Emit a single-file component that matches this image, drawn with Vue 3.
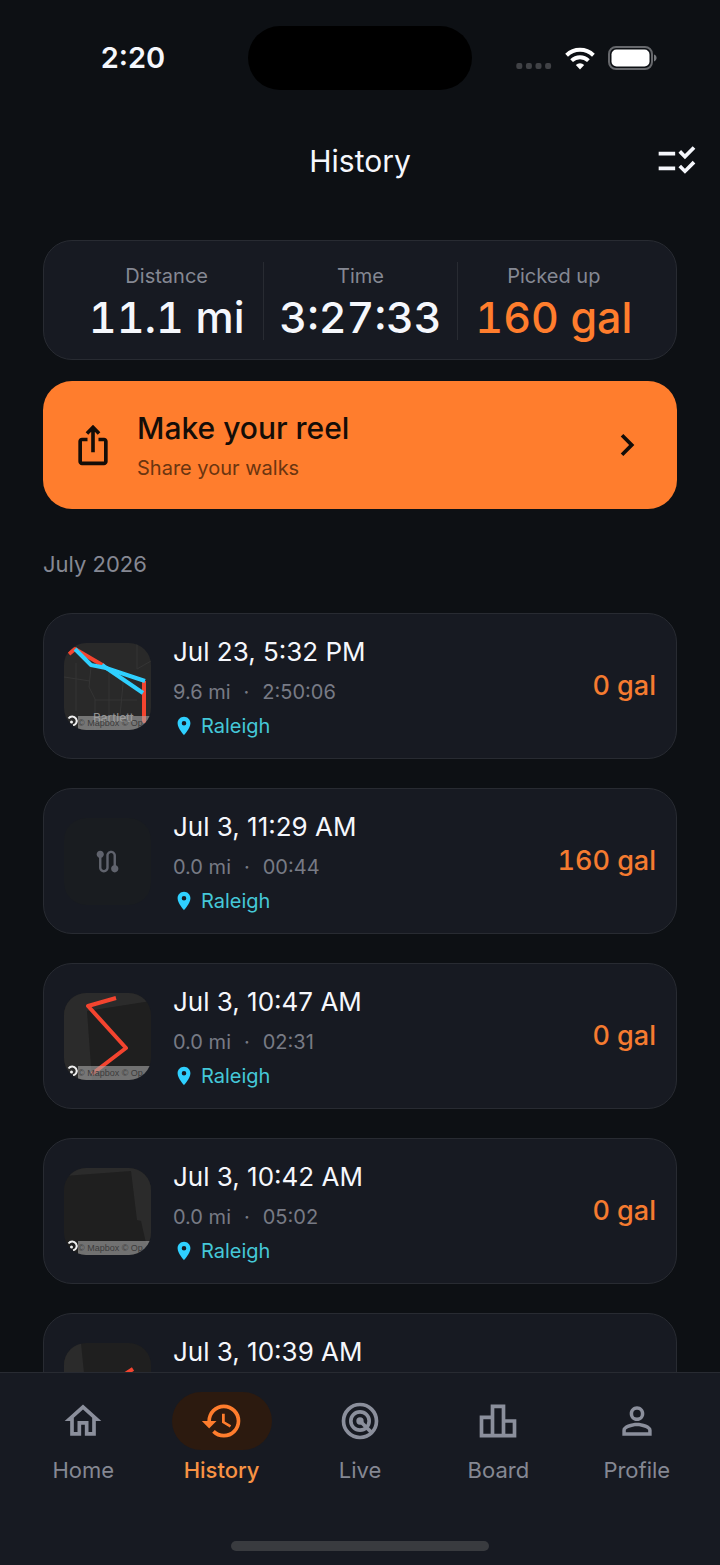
<template>
    <div class="screen">
        <div class="status-bar">
            <span class="clock">2:20</span>
            <span class="island"></span>
            <div class="status-icons">
                <svg class="signal" viewBox="0 0 36 8" aria-hidden="true">
                    <rect v-for="n in 4" :key="n" :x="(n - 1) * 9.6 + 0.3" y="1" width="6" height="6" rx="2" />
                </svg>
                <svg class="wifi" viewBox="0 0 30 23" aria-hidden="true">
                    <path d="M1.6 8.2a19.4 19.4 0 0 1 26.8 0" />
                    <path d="M6.6 13.6a12.4 12.4 0 0 1 16.8 0" />
                    <path class="wifi-dot" d="M15 22.4l-4.2-4.5a6.2 6.2 0 0 1 8.4 0z" />
                </svg>
                <svg class="battery" viewBox="0 0 50 24" aria-hidden="true">
                    <rect class="shell" x="1" y="1" width="43" height="22" rx="7" />
                    <rect class="charge" x="3.5" y="3.5" width="38" height="17" rx="5" />
                    <path class="tip" d="M46 8.6c3.4 1 3.4 5.8 0 6.8z" />
                </svg>
            </div>
        </div>

        <header class="app-bar">
            <h1>History</h1>
            <button class="select-button" type="button" aria-label="Select walks">
                <svg class="icon" viewBox="0 0 24 24"><path :d="icons.checklist" /></svg>
            </button>
        </header>

        <main class="content">
            <section class="stats">
                <div v-for="stat in stats" :key="stat.label" class="stat">
                    <span class="stat-label">{{ stat.label }}</span>
                    <span class="stat-value" :class="{ accent: stat.accent }">{{ stat.value }}</span>
                </div>
            </section>

            <button class="reel" type="button">
                <svg class="icon" viewBox="0 0 24 24"><path :d="icons.share" /></svg>
                <span class="reel-text">
                    <span class="reel-title">Make your reel</span>
                    <span class="reel-subtitle">Share your walks</span>
                </span>
                <svg class="icon" viewBox="0 0 24 24"><path :d="icons.chevron" /></svg>
            </button>

            <h2>July 2026</h2>

            <ul class="walks">
                <li v-for="walk in walks" :key="walk.date" class="walk">
                    <div v-if="!walk.map" class="thumb empty">
                        <svg viewBox="0 0 24 24"><path :d="icons.route" /></svg>
                    </div>
                    <svg v-else class="thumb" viewBox="0 0 87 87" aria-hidden="true">
                        <rect width="87" height="87" :fill="walk.map.ground" />
                        <path v-for="d in walk.map.areas" :key="d" :d="d" fill="#2b2b2b" />
                        <path v-for="d in walk.map.roads" :key="d" :d="d" class="road" />
                        <path v-for="line in walk.map.lines" :key="line.d" :d="line.d" class="track" :stroke="line.color" />
                        <text v-if="walk.map.place" class="place" x="29" y="79">{{ walk.map.place }}</text>
                        <rect class="credit-bar" x="14" y="73" width="73" height="14" />
                        <text class="credit" x="14" y="83">© Mapbox © Op</text>
                        <path class="map-logo" d="M4.5 75.5a4.5 4.5 0 1 1 4.5 7" />
                        <circle cx="7.5" cy="79" r="1.5" fill="#eee" />
                    </svg>
                    <div class="walk-info">
                        <span class="walk-date">{{ walk.date }}</span>
                        <span class="walk-meta">{{ walk.distance }}<span class="dot">·</span>{{ walk.time }}</span>
                        <span class="walk-place">
                            <svg viewBox="0 0 24 24" aria-hidden="true"><path :d="icons.pin" /></svg>
                            Raleigh
                        </span>
                    </div>
                    <span class="walk-amount">{{ walk.amount }}</span>
                </li>
            </ul>
        </main>

        <nav class="tab-bar">
            <div class="tabs">
                <a v-for="tab in tabs" :key="tab.label" href="#" class="tab" :class="{ active: tab.active }">
                    <span class="pill">
                        <svg v-if="tab.icon" class="icon" viewBox="0 0 24 24"><path :d="tab.icon" /></svg>
                        <svg v-else class="icon radar" viewBox="0 0 24 24">
                            <circle cx="12" cy="12" r="9" />
                            <circle cx="12" cy="12" r="5" />
                            <path d="M12 12l6.5 6.5" />
                            <circle class="core" cx="12" cy="12" r="2" />
                        </svg>
                    </span>
                    <span class="tab-label">{{ tab.label }}</span>
                </a>
            </div>
            <div class="home-indicator"></div>
        </nav>
    </div>
</template>

<script setup>
const icons = {
    checklist: 'M11 7H2v2h9V7zm0 8H2v2h9v-2zm5.34-4l-3.54-3.54 1.41-1.41 2.12 2.12 4.24-4.24L22 5.34 16.34 11zm0 8l-3.54-3.54 1.41-1.41 2.12 2.12 4.24-4.24L22 13.34 16.34 19z',
    share: 'M16 5l-1.42 1.42-1.59-1.59V16h-1.98V4.83L9.42 6.42 8 5l4-4 4 4zm4 5v11c0 1.1-.9 2-2 2H6c-1.11 0-2-.9-2-2V10c0-1.11.89-2 2-2h3v2H6v11h12V10h-3V8h3c1.1 0 2 .89 2 2z',
    chevron: 'M10 6L8.59 7.41 13.17 12l-4.58 4.59L10 18l6-6z',
    route: 'M19 15.18V7c0-2.21-1.79-4-4-4s-4 1.79-4 4v10c0 1.1-.9 2-2 2s-2-.9-2-2V8.82C8.16 8.4 9 7.3 9 6c0-1.66-1.34-3-3-3S3 4.34 3 6c0 1.3.84 2.4 2 2.82V17c0 2.21 1.79 4 4 4s4-1.79 4-4V7c0-1.1.9-2 2-2s2 .9 2 2v8.18c-1.16.41-2 1.51-2 2.82 0 1.66 1.34 3 3 3s3-1.34 3-3c0-1.3-.84-2.4-2-2.82z',
    pin: 'M12 2C8.13 2 5 5.13 5 9c0 5.25 7 13 7 13s7-7.75 7-13c0-3.87-3.13-7-7-7zm0 9.5a2.5 2.5 0 0 1 0-5 2.5 2.5 0 0 1 0 5z',
    home: 'M12 5.69l5 4.5V18h-2v-6H9v6H7v-7.81l5-4.5M12 3L2 12h3v8h6v-6h2v6h6v-8h3L12 3z',
    history: 'M13 3a9 9 0 0 0-9 9H1l3.89 3.89.07.14L9 12H6c0-3.87 3.13-7 7-7s7 3.13 7 7-3.13 7-7 7c-1.93 0-3.68-.79-4.94-2.06l-1.42 1.42A8.954 8.954 0 0 0 13 21a9 9 0 0 0 0-18zm-1 5v5l4.28 2.54.72-1.21-3.5-2.08V8H12z',
    board: 'M16 11V3H8v6H2v12h20V11h-6zm-6-6h4v14h-4V5zm-6 6h4v8H4v-8zm16 8h-4v-6h4v6z',
    profile: 'M12 5.9a2.1 2.1 0 1 1 0 4.2 2.1 2.1 0 0 1 0-4.2m0 9c2.97 0 6.1 1.46 6.1 2.1v1.1H5.9V17c0-.64 3.13-2.1 6.1-2.1M12 4C9.79 4 8 5.79 8 8s1.79 4 4 4 4-1.79 4-4-1.79-4-4-4zm0 9c-2.67 0-8 1.34-8 4v3h16v-3c0-2.66-5.33-4-8-4z'
}

const red = '#f4442f'
const cyan = '#2fd0ff'

const stats = [
    { label: 'Distance', value: '11.1 mi' },
    { label: 'Time', value: '3:27:33' },
    { label: 'Picked up', value: '160 gal', accent: true }
]

const walks = [
    {
        date: 'Jul 23, 5:32 PM', distance: '9.6 mi', time: '2:50:06', amount: '0 gal',
        map: {
            ground: '#292929',
            place: 'Bartlett',
            roads: ['M12 20v48', 'M27 24l-2 20 6 12v31', 'M45 30v43', 'M31 57h42', 'M73 0v26l14-8', 'M60 30l-4 43', 'M0 34l26 4'],
            lines: [
                { d: 'M5 11l6-5 29 17', color: red },
                { d: 'M80 38v42', color: red },
                { d: 'M11 6l16 16 15 3 39 13', color: cyan },
                { d: 'M38 22l41 28', color: cyan }
            ]
        }
    },
    { date: 'Jul 3, 11:29 AM', distance: '0.0 mi', time: '00:44', amount: '160 gal' },
    {
        date: 'Jul 3, 10:47 AM', distance: '0.0 mi', time: '02:31', amount: '0 gal',
        map: {
            ground: '#1f1f1f',
            areas: ['M0 0h87v8L23 18l5 69H0z'],
            lines: [{ d: 'M52 5L24 13l38 42-34 26', color: red }]
        }
    },
    {
        date: 'Jul 3, 10:42 AM', distance: '0.0 mi', time: '05:02', amount: '0 gal',
        map: {
            ground: '#1f1f1f',
            areas: ['M0 0h87v87l-5-12-5-22-4-1-6-49L0 8z']
        }
    },
    {
        date: 'Jul 3, 10:39 AM', distance: '0.0 mi', time: '01:48', amount: '0 gal',
        map: {
            ground: '#1f1f1f',
            areas: ['M0 0h17l3 30-2 57H0z'],
            lines: [{ d: 'M69 26l-14 9', color: red }]
        }
    }
]

const tabs = [
    { label: 'Home', icon: icons.home },
    { label: 'History', icon: icons.history, active: true },
    { label: 'Live' },
    { label: 'Board', icon: icons.board },
    { label: 'Profile', icon: icons.profile }
]
</script>

<style>
body {
    margin: 0;
    background: #0d1014;
}
</style>

<style scoped>
.screen {
    display: flex;
    flex-direction: column;
    height: 100vh;
    background: #0d1014;
    color: #f5f7fc;
    font-family: Inter, "Liberation Sans", sans-serif;
}

button {
    border: 0;
    padding: 0;
    background: none;
    color: inherit;
    font: inherit;
    cursor: pointer;
}

svg {
    display: block;
    fill: currentColor;
    flex: none;
}

.icon {
    width: 44px;
    height: 44px;
}

/* status bar */
.status-bar {
    display: grid;
    grid-template-columns: 1fr 224px 1fr;
    align-items: center;
    padding: 26px 0 20px;
}

.clock {
    padding-left: 18px;
    text-align: center;
    font-size: 29px;
    line-height: 36px;
    font-weight: 600;
}

.island {
    height: 64px;
    border-radius: 32px;
    background: #000;
}

.status-icons {
    display: flex;
    align-items: center;
    justify-content: center;
    gap: 13px;
    padding-right: 18px;
}

.signal {
    width: 36px;
    height: 8px;
    margin-top: 16px;
    fill: #404246;
}

.wifi {
    width: 30px;
    height: 23px;
    fill: none;
    stroke: #fff;
    stroke-width: 4;
}

.wifi-dot {
    fill: #fff;
    stroke: none;
}

.battery {
    width: 50px;
    height: 24px;
}

.shell {
    fill: none;
    stroke: #66686c;
    stroke-width: 2;
}

.charge {
    fill: #fff;
}

.tip {
    fill: #77797d;
}

/* title */
.app-bar {
    display: grid;
    grid-template-columns: 1fr auto 1fr;
    align-items: center;
    height: 102px;
    padding: 0 21px;
}

h1 {
    grid-column: 2;
    margin: 0;
    font-size: 30px;
    line-height: 38px;
    font-weight: 400;
}

.select-button {
    justify-self: end;
}

/* page */
.content {
    flex: 1;
    min-height: 0;
    overflow-y: auto;
    scrollbar-width: none;
    padding: 28px 43px 0;
}

.stats {
    display: grid;
    grid-template-columns: repeat(3, 1fr);
    padding: 21px 26px 19px;
    border: 1px solid #282b32;
    border-radius: 29px;
    background: #171a22;
}

.stat {
    display: flex;
    flex-direction: column;
    align-items: center;
    white-space: nowrap;
}

.stat + .stat {
    border-left: 1px solid #282b32;
}

.stat-label {
    color: #858893;
    font-size: 20px;
    line-height: 28px;
}

.stat-value {
    padding-top: 4px;
    font-size: 43px;
    line-height: 46px;
    font-weight: 500;
    font-variant-numeric: tabular-nums;
}

.accent {
    color: #ff7d2d;
}

.reel {
    display: flex;
    align-items: center;
    gap: 22px;
    width: 100%;
    margin-top: 21px;
    padding: 27px 28px;
    border-radius: 29px;
    background: #ff7d2d;
    color: #140d08;
    text-align: left;
}

.reel-text {
    display: flex;
    flex: 1;
    flex-direction: column;
    gap: 6px;
}

.reel-title {
    font-size: 30px;
    line-height: 40px;
    font-weight: 500;
}

.reel-subtitle {
    color: #6b3510;
    font-size: 20px;
    line-height: 28px;
}

h2 {
    margin: 41px 0 35px;
    color: #858893;
    font-size: 22px;
    line-height: 28px;
    font-weight: 400;
}

.walks {
    display: flex;
    flex-direction: column;
    gap: 29px;
    margin: 0;
    padding: 0;
    list-style: none;
}

.walk {
    display: flex;
    align-items: center;
    gap: 22px;
    padding: 18px 20px;
    border: 1px solid #282b32;
    border-radius: 29px;
    background: #171a22;
}

.thumb {
    flex: none;
    width: 87px;
    height: 87px;
    overflow: hidden;
    border-radius: 22px;
}

.empty {
    display: flex;
    align-items: center;
    justify-content: center;
    background: #191c20;
    color: #60636d;
}

.empty svg {
    width: 29px;
    height: 29px;
}

.road {
    fill: none;
    stroke: #353535;
}

.track {
    fill: none;
    stroke-width: 4;
    stroke-linejoin: round;
}

.place {
    fill: #929292;
    font-size: 12px;
}

.credit-bar {
    fill: #a8a8a8;
    opacity: 0.6;
}

.credit {
    fill: #3c3c3c;
    font-family: "Liberation Sans", sans-serif;
    font-size: 9px;
}

.map-logo {
    fill: none;
    stroke: #eee;
    stroke-width: 2;
}

.walk-info {
    display: flex;
    flex: 1;
    flex-direction: column;
    padding-top: 2px;
}

.walk-date {
    font-size: 26px;
    line-height: 36px;
}

.walk-meta {
    padding: 8px 0 6px;
    color: #777a85;
    font-size: 20px;
    line-height: 28px;
}

.dot {
    margin: 0 13px;
}

.walk-place {
    display: flex;
    align-items: center;
    gap: 6px;
    color: #45c8d8;
    font-size: 20px;
    line-height: 28px;
}

.walk-place svg {
    width: 22px;
    height: 22px;
    fill: #2fd0ff;
}

.walk-amount {
    color: #f57b30;
    font-size: 27px;
    line-height: 36px;
    font-weight: 500;
    font-variant-numeric: tabular-nums;
}

/* bottom tabs */
.tab-bar {
    flex: none;
    border-top: 1px solid #282b32;
    background: #171a22;
}

.tabs {
    display: grid;
    grid-template-columns: repeat(5, 1fr);
    padding: 19px 14px 0;
}

.tab {
    display: flex;
    flex-direction: column;
    align-items: center;
    gap: 6px;
    color: #8b8f9c;
    text-decoration: none;
}

.pill {
    display: flex;
    align-items: center;
    justify-content: center;
    width: 100px;
    height: 58px;
    border-radius: 29px;
}

.tab-label {
    color: #858893;
    font-size: 22px;
    line-height: 28px;
}

.active {
    color: #ff7d2d;
}

.active .tab-label {
    color: #f79244;
    font-weight: 500;
}

.active .pill {
    background: #2c1a0f;
}

.radar {
    fill: none;
    stroke: currentColor;
    stroke-width: 2;
}

.core {
    fill: currentColor;
    stroke: none;
}

.home-indicator {
    width: 258px;
    height: 10px;
    margin: 57px auto 14px;
    border-radius: 5px;
    background: #393b3f;
}
</style>
